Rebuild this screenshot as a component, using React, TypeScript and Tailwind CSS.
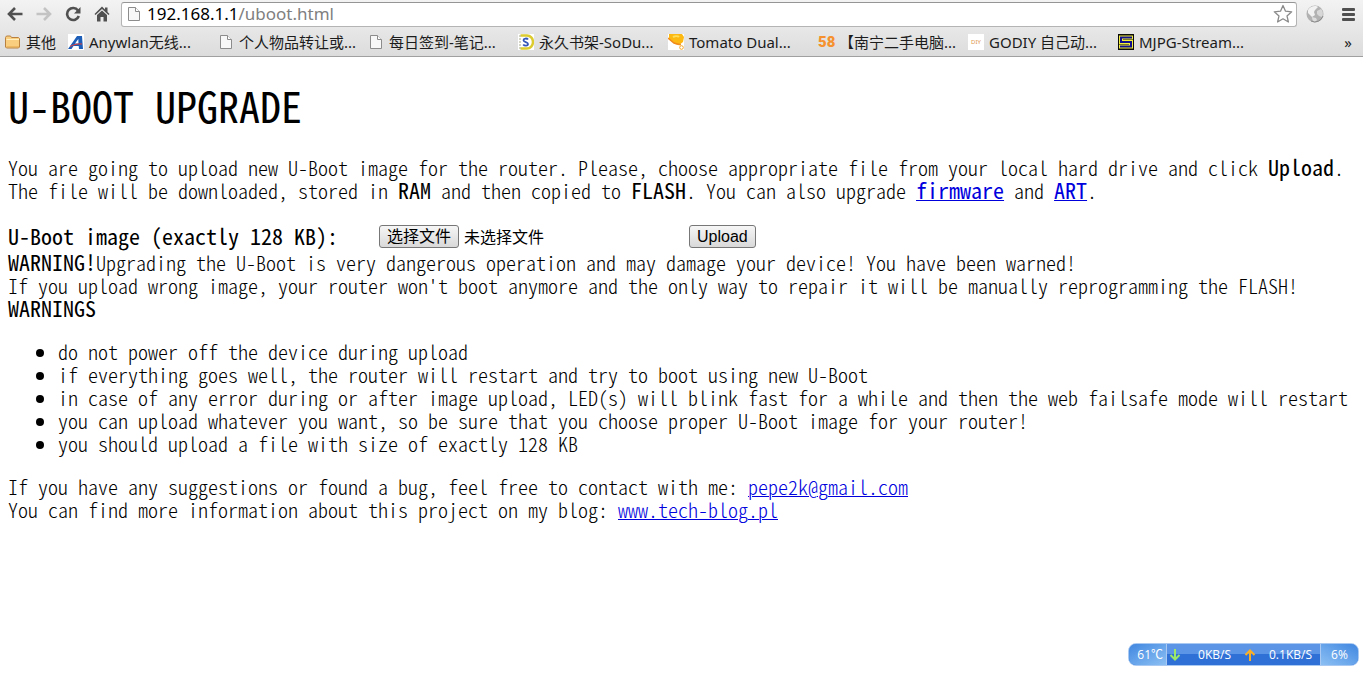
import type { ReactNode } from 'react'

const PageIcon = () => (
  <svg viewBox="0 0 16 16" className="w-4 h-4 shrink-0">
    <path d="M2.5 1.5h7l4 4v9h-11z" fill="#f8f8f8" stroke="#8c8c8c" />
    <path d="M9.5 1.5v4h4" fill="#fff" stroke="#8c8c8c" />
  </svg>
)

const FolderIcon = () => (
  <svg viewBox="0 0 16 16" className="w-4 h-4 shrink-0">
    <path d="M.5 13V3.5L1.5 2h4l1 1.500h7l1 1V13l-1 1h-12z" fill="#f9cf7f" stroke="#b98140" />
    <path d="M1.500 5.500h12.500" stroke="#fff0c4" />
    <path d="M1.500 12.500h12.500" stroke="#eeb863" />
  </svg>
)

const AnywlanIcon = () => (
  <svg viewBox="0 0 16 16" className="w-4 h-4 shrink-0">
    <path d="M0 0h16v16H0z" fill="#fff" />
    <path d="M0 15L9 2h5l1 13h-4l-.3-3H5.500L3.500 15zM7 9.500h3.500L10.300 5z" fill="#1d5fb8" />
    <path d="M2 12.500c4-2 8-3 12-2.500" stroke="#e03c3c" fill="none" />
  </svg>
)

const SoduIcon = () => (
  <svg viewBox="0 0 16 16" className="w-4 h-4 shrink-0">
    <path d="M0 0h16v16H0z" fill="#fff" />
    <path d="M2.500 1.500H9a6 6.500 0 0 1 0 13H2.500" fill="none" stroke="#dccb2e" strokeWidth="2.500" />
    <path d="M2 1v14" stroke="#a9a98a" strokeDasharray="2 1" />
    <path d="M10 5.500C9 4 5.500 4.200 5.500 6.200S10 8 10 10s-3.500 2.200-4.800.5" fill="none" stroke="#3558b8" strokeWidth="1.800" />
  </svg>
)

const TomatoIcon = () => (
  <svg viewBox="0 0 16 16" className="w-4 h-4 shrink-0">
    <path d="M0 0h16v16H0z" fill="#fff" />
    <path d="M1 0h13l2 3-1 5-4 3-4-1-6-5z" fill="#fcb813" />
    <path d="M0 4l6 5 5 1.500" fill="none" stroke="#f08a1c" strokeWidth="1.500" />
    <path d="M5 3c2-1 5-1 6 0" fill="none" stroke="#ffdf5a" strokeWidth="2" />
    <circle cx="13.500" cy="13.500" r="1.800" fill="#fff" stroke="#f5a623" />
    <circle cx="12" cy="10.500" r="1" fill="#f08a1c" />
  </svg>
)

const MjpgIcon = () => (
  <svg viewBox="0 0 16 16" className="w-4 h-4 shrink-0">
    <path d="M0 0h16v16H0z" fill="#0a0a0a" />
    <path d="M15 3.500H3v4.500h10v4.500H1" fill="none" stroke="#f4ef3c" strokeWidth="4" />
    <path d="M14 3.500H3v4.500h10v4.500H2" fill="none" stroke="#10108c" strokeWidth="2" />
  </svg>
)

const bookmarks: { icon: ReactNode; title: string }[] = [
  { icon: <AnywlanIcon />, title: 'Anywlan无线...' },
  { icon: <PageIcon />, title: '个人物品转让或...' },
  { icon: <PageIcon />, title: '每日签到-笔记...' },
  { icon: <SoduIcon />, title: '永久书架-SoDu...' },
  { icon: <TomatoIcon />, title: 'Tomato Dual...' },
  {
    icon: <span className="w-4 shrink-0 text-[15px] font-black leading-4 text-[#f5922f] font-['Roboto',sans-serif]">58</span>,
    title: '【南宁二手电脑...',
  },
  {
    icon: <span className="flex h-4 w-4 shrink-0 items-center justify-center bg-white text-[6px] leading-none text-[#e0954a]">DIY</span>,
    title: 'GODIY 自己动...',
  },
  { icon: <MjpgIcon />, title: 'MJPG-Stream...' },
]

const warnings = [
  'do not power off the device during upload',
  'if everything goes well, the router will restart and try to boot using new U-Boot',
  'in case of any error during or after image upload, LED(s) will blink fast for a while and then the web failsafe mode will restart',
  'you can upload whatever you want, so be sure that you choose proper U-Boot image for your router!',
  'you should upload a file with size of exactly 128 KB',
]

const Toolbar = () => (
  <div className="flex h-7 items-center">
    <div className="flex w-[121px] shrink-0 items-center gap-[13px] pl-[7px]">
      <button aria-label="Back">
        <svg viewBox="0 0 16 16" className="w-4 h-4" fill="none" stroke="#505050" strokeWidth="2.600">
          <path d="M15.500 8H2.500M8 2L2 8l6 6" />
        </svg>
      </button>
      <button aria-label="Forward">
        <svg viewBox="0 0 16 16" className="w-4 h-4" fill="none" stroke="#c3c3c3" strokeWidth="2.600">
          <path d="M.5 8h13M8 2l6 6-6 6" />
        </svg>
      </button>
      <button aria-label="Reload">
        <svg viewBox="0 0 16 16" className="w-4 h-4">
          <path d="M13 4.500A6 6 0 1 0 13.800 10" fill="none" stroke="#505050" strokeWidth="2.600" />
          <path d="M15.500 1v6.500H9z" fill="#505050" />
        </svg>
      </button>
      <button aria-label="Home">
        <svg viewBox="0 0 16 16" className="w-4 h-4" fill="#505050">
          <path d="M8 .5L.5 8l1 1L8 3l6.500 6 1-1L13.500 6V1.500h-2.500v2z" />
          <path d="M3 9l5-4.600L13 9v6.500H9.500V11h-3v4.500H3z" />
        </svg>
      </button>
    </div>
    <div className="flex h-[25px] flex-1 items-center rounded-[3px] border border-[#b4b4b4] border-t-[#959595] bg-white pl-1 pr-[3px]">
      <PageIcon />
      <div className="flex-1 pl-[5px] text-[17px] leading-[22px] text-[#808080]">
        <span className="text-black">192.168.1.1</span>/uboot.html
      </div>
      <button aria-label="Bookmark this page">
        <svg viewBox="0 0 20 20" className="w-5 h-5">
          <path d="M10 1.500l2.500 5.700 6.200.6-4.700 4.100 1.400 6.100L10 14.800 4.600 18 6 11.900 1.300 7.800l6.200-.6z" fill="#fff" stroke="#8a8a8a" strokeWidth="1.300" strokeLinejoin="round" />
        </svg>
      </button>
    </div>
    <div className="flex w-[66px] shrink-0 items-center justify-between pl-[9px] pr-2">
      <button aria-label="Globe">
        <svg viewBox="0 0 18 18" className="w-[18px] h-[18px]">
          <circle cx="9" cy="9" r="8.500" fill="#b2b2b2" />
          <path d="M2 5c2-4 8-5 10-3L9 5 8 7l1 3-3 2-4-4z" fill="#f2f2f2" />
          <path d="M11 6l4-2c2 2 2.500 5 1 8l-3-1-2-2z" fill="#d8d8d8" />
          <path d="M6 12l4 1 1 2-2 2c-2-1-3-2-3-5z" fill="#dedede" />
          <path d="M17 11a8.500 8.500 0 0 1-12 5" fill="none" stroke="#8c8c8c" />
        </svg>
      </button>
      <button aria-label="Menu" className="flex w-[13px] flex-col gap-[2px]">
        <span className="h-[3px] rounded-[1px] bg-[#505050]" />
        <span className="h-[3px] rounded-[1px] bg-[#505050]" />
        <span className="h-[3px] rounded-[1px] bg-[#505050]" />
      </button>
    </div>
  </div>
)

const BookmarksBar = () => (
  <nav className="flex h-7 items-center pl-[5px] pr-[11px] text-[15px] leading-5 text-[#1c1c1c]">
    <a href="#" className="flex w-[63px] shrink-0 items-center gap-[5px] whitespace-nowrap">
      <FolderIcon />其他
    </a>
    {bookmarks.map((b) => (
      <a key={b.title} href="#" className="flex w-[150px] shrink-0 items-center gap-[5px] whitespace-nowrap">
        {b.icon}
        {b.title}
      </a>
    ))}
    <button aria-label="More bookmarks" className="ml-auto">»</button>
  </nav>
)

const SpeedWidget = () => (
  <aside className="absolute right-1 top-[643px] flex h-[23px] w-[231px] items-center overflow-hidden rounded-lg border border-[#a9c9f2] bg-linear-to-b from-[#5c95e6] from-50% to-[#2f70d6] to-50% text-[12px] text-white">
    <span className="flex h-full w-[38px] items-center justify-end border-r border-[#a9c9f2] bg-linear-to-br from-[#3f86e0] to-[#8cc0f3] pr-[3px]">61℃</span>
    <span className="flex flex-1 items-center pl-[2px]">
      <svg viewBox="0 0 12 12" className="w-3 h-3" fill="none" stroke="#9be86a" strokeWidth="2">
        <path d="M6 0v10.500M1.500 6L6 10.500 10.500 6" />
      </svg>
      <span className="w-[50px] text-right">0KB/S</span>
      <svg viewBox="0 0 12 12" className="mx-[13px] w-3 h-3" fill="none" stroke="#fbb024" strokeWidth="2">
        <path d="M6 12V1.500M1.500 6L6 1.500 10.500 6" />
      </svg>
      <span>0.1KB/S</span>
    </span>
    <span className="flex h-full w-[38px] items-center justify-center border-l border-[#a9c9f2] bg-linear-to-bl from-[#3f86e0] to-[#8cc0f3]">6%</span>
  </aside>
)

const Bold = ({ children }: { children: ReactNode }) => <b className="text-[22px] leading-0">{children}</b>

const link = 'text-[#0000dd] underline decoration-1'

const control =
  "h-[23px] rounded-[3px] border border-[#777] bg-linear-to-b from-[#f6f6f6] to-[#d9d9d9] px-[7px] text-[16px] leading-5 whitespace-nowrap font-normal font-['Liberation_Sans','Noto_Sans_CJK_SC',sans-serif]"

const App = () => {
  return (
    <div className="relative min-h-screen bg-white text-black">
      <header className="border-b border-[#a0a0a0] bg-linear-to-b from-[#f3f3f3] to-[#dcdcdc] font-['Noto_Sans','Noto_Sans_CJK_SC',sans-serif]">
        <Toolbar />
        <BookmarksBar />
      </header>

      <main className="px-2 pt-6 text-[20px] leading-[23px] font-light font-['Noto_Sans_CJK_SC',monospace] [font-feature-settings:'hwid','liga'_0]">
        <h1 className="text-[42px] leading-[48px] font-normal">U-BOOT UPGRADE</h1>

        <p className="mt-[27px] whitespace-nowrap">
          You are going to upload new U-Boot image for the router. Please, choose appropriate file from your local hard drive and click <Bold>Upload</Bold>.
          <br />
          The file will be downloaded, stored in <Bold>RAM</Bold> and then copied to <Bold>FLASH</Bold>. You can also upgrade{' '}
          <a href="#" className={link}><Bold>firmware</Bold></a> and{' '}
          <a href="#" className={link}><Bold>ART</Bold></a>.
        </p>

        {/* upload form */}
        <form className="mt-[23px] flex items-center" onSubmit={(e) => e.preventDefault()}>
          <label htmlFor="firmware" className="w-[371px] shrink-0"><Bold>U-Boot image (exactly 128 KB):</Bold></label>
          <div className="flex w-[310px] shrink-0 items-center gap-[5px]">
            <input id="firmware" type="file" className="sr-only" />
            <button type="button" className={control} onClick={() => document.getElementById('firmware')?.click()}>选择文件</button>
            <span className="text-[16px] font-normal">未选择文件</span>
          </div>
          <button type="submit" className={control}>Upload</button>
        </form>

        <p className="mt-[3px] whitespace-nowrap">
          <Bold>WARNING!</Bold>Upgrading the U-Boot is very dangerous operation and may damage your device! You have been warned!
          <br />
          If you upload wrong image, your router won't boot anymore and the only way to repair it will be manually reprogramming the FLASH!
          <br />
          <Bold>WARNINGS</Bold>
        </p>

        <ul className="my-5 list-disc whitespace-nowrap pl-[50px]">
          {warnings.map((w) => (
            <li key={w}>{w}</li>
          ))}
        </ul>

        <p>
          If you have any suggestions or found a bug, feel free to contact with me:{' '}
          <a href="#" className={link}>pepe2k@gmail.com</a>
          <br />
          You can find more information about this project on my blog:{' '}
          <a href="#" className={link}>www.tech-blog.pl</a>
        </p>
      </main>

      <div className="font-['Open_Sans','Noto_Sans_CJK_SC',sans-serif]">
        <SpeedWidget />
      </div>
    </div>
  )
}

export default App
